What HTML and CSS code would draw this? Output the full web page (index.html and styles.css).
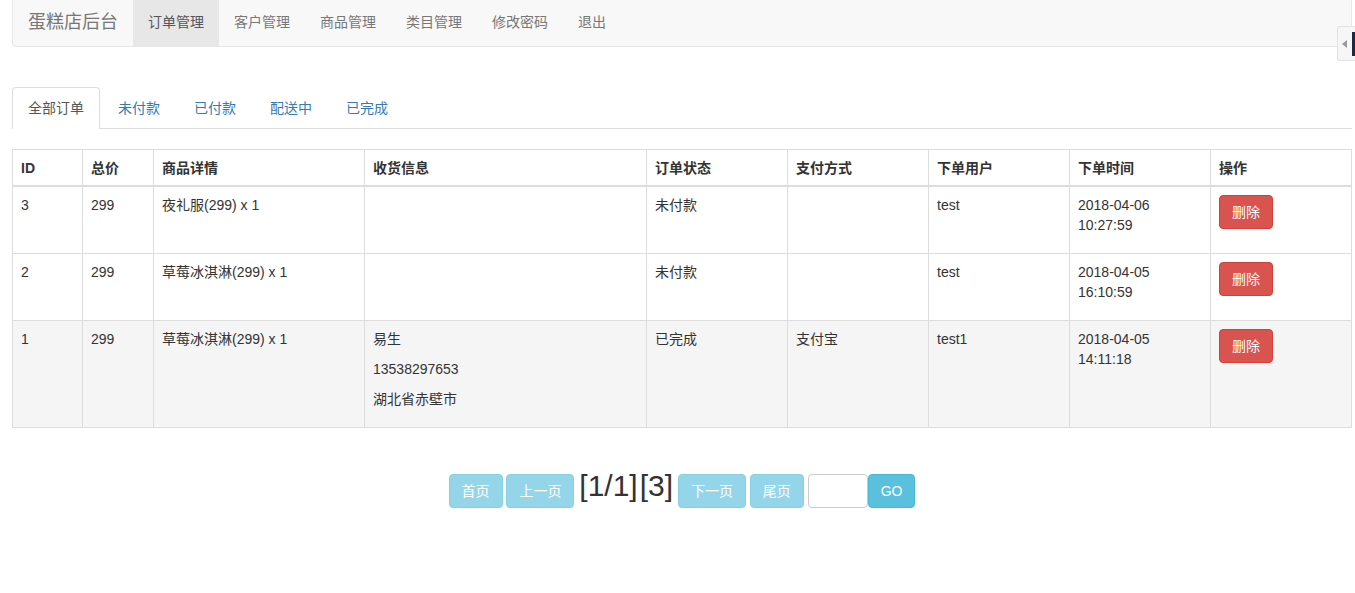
FILE: index.html
```html
<!DOCTYPE html>
<html lang="zh">
<head>
<meta charset="UTF-8">
<title>订单管理</title>
<link rel="stylesheet" href="styles.css">
</head>
<body>
<div class="page">
<nav class="navbar">
<a class="brand" href="#">蛋糕店后台</a>
<ul class="nav">
<li class="active"><a href="#">订单管理</a></li>
<li><a href="#">客户管理</a></li>
<li><a href="#">商品管理</a></li>
<li><a href="#">类目管理</a></li>
<li><a href="#">修改密码</a></li>
<li><a href="#">退出</a></li>
</ul>
</nav>

<ul class="tabs">
<li class="active"><a href="#">全部订单</a></li>
<li><a href="#">未付款</a></li>
<li><a href="#">已付款</a></li>
<li><a href="#">配送中</a></li>
<li><a href="#">已完成</a></li>
</ul>

<table class="orders">
<colgroup>
<col style="width:70px"><col style="width:71px"><col style="width:211px"><col style="width:282px">
<col style="width:141px"><col style="width:141px"><col style="width:141px"><col style="width:141px"><col style="width:141px">
</colgroup>
<thead>
<tr><th>ID</th><th>总价</th><th>商品详情</th><th>收货信息</th><th>订单状态</th><th>支付方式</th><th>下单用户</th><th>下单时间</th><th>操作</th></tr>
</thead>
<tbody>
<tr>
<td>3</td><td>299</td><td>夜礼服(299) x 1</td><td></td><td>未付款</td><td></td><td>test</td>
<td><p>2018-04-06<br>10:27:59</p></td>
<td><a class="btn btn-danger" href="#">删除</a></td>
</tr>
<tr>
<td>2</td><td>299</td><td>草莓冰淇淋(299) x 1</td><td></td><td>未付款</td><td></td><td>test</td>
<td><p>2018-04-05<br>16:10:59</p></td>
<td><a class="btn btn-danger" href="#">删除</a></td>
</tr>
<tr class="hover">
<td>1</td><td>299</td><td>草莓冰淇淋(299) x 1</td>
<td><p>易生</p><p>13538297653</p><p>湖北省赤壁市</p></td>
<td>已完成</td><td>支付宝</td><td>test1</td>
<td><p>2018-04-05<br>14:11:18</p></td>
<td><a class="btn btn-danger" href="#">删除</a></td>
</tr>
</tbody>
</table>

<div class="pager">
<a class="btn btn-info disabled" href="#">首页</a>
<a class="btn btn-info disabled" href="#">上一页</a>
<span class="pageinfo"><span>[1/1]</span><span class="total">[3]</span></span>
<a class="btn btn-info disabled" href="#">下一页</a>
<a class="btn btn-info disabled" href="#">尾页</a>
<input class="pagebox" type="text"><a class="btn btn-info" href="#">GO</a>
</div>
</div>

<div class="sidetab"><span class="arrow"></span><span class="bar"></span></div>
</body>
</html>
```

FILE: styles.css
```css
* {
box-sizing: border-box;
}
body {
margin: 0;
font-family: "Liberation Sans", Arial, "Noto Sans CJK SC", sans-serif;
font-size: 14px;
line-height: 20px;
color: #333;
background: #fff;
}
a {
text-decoration: none;
}
ul {
list-style: none;
margin: 0;
padding: 0;
}
.page {
padding: 0 3px 0 12px;
}
.navbar {
display: flex;
height: 51px;
margin-top: -4px;
padding: 0 15px;
background: #f8f8f8;
border: 1px solid #e7e7e7;
border-radius: 4px;
}
.brand {
padding: 15px 15px 15px 0;
font-size: 18px;
line-height: 20px;
color: #777;
}
.nav {
display: flex;
}
.nav a {
display: block;
padding: 15px;
color: #777;
}
.nav .active a {
background: #e7e7e7;
color: #555;
}
.tabs {
display: flex;
margin-top: 40px;
border-bottom: 1px solid #ddd;
}
.tabs li {
margin-right: 2px;
margin-bottom: -1px;
}
.tabs a {
display: block;
padding: 10px 15px;
border: 1px solid transparent;
border-radius: 4px 4px 0 0;
color: #337ab7;
}
.tabs .active a {
color: #555;
background: #fff;
border-color: #ddd #ddd transparent;
}
.orders {
width: 1339px;
margin-top: 20px;
border-collapse: collapse;
table-layout: fixed;
border: 1px solid #ddd;
}
.orders th,
.orders td {
padding: 8px;
border: 1px solid #ddd;
text-align: left;
vertical-align: top;
}
.orders thead th {
border-bottom-width: 2px;
padding-bottom: 7px;
}
.orders p {
margin: 0 0 10px;
}
.orders .hover td {
background: #f5f5f5;
}
.btn {
display: inline-block;
padding: 6px 12px;
font-size: 14px;
line-height: 20px;
border: 1px solid transparent;
border-radius: 4px;
color: #fff;
vertical-align: baseline;
}
.btn-danger {
background: #d9534f;
border-color: #d43f3a;
}
.btn-info {
background: #5bc0de;
border-color: #46b8da;
}
.btn.disabled {
opacity: .65;
}
.pager {
margin-top: 43px;
text-align: center;
}
.pageinfo {
margin: 0 1px;
font-size: 30px;
line-height: 30px;
}
.pageinfo .total {
margin-left: 2px;
}
.pagebox {
width: 60px;
height: 34px;
padding: 6px;
border: 1px solid #ccc;
border-radius: 4px;
font: inherit;
vertical-align: baseline;
}
.sidetab {
position: absolute;
top: 26px;
left: 1337px;
width: 18px;
height: 35px;
background: #f6f6f6;
border: 1px solid #e2e2e2;
border-right: none;
border-radius: 3px 0 0 3px;
}
.arrow {
position: absolute;
left: 4px;
top: 13px;
border-style: solid;
border-width: 4px 5px 4px 0;
border-color: transparent #999 transparent transparent;
}
.bar {
position: absolute;
right: 0;
top: 5px;
width: 3px;
height: 24px;
background: #1c2a40;
}
```
